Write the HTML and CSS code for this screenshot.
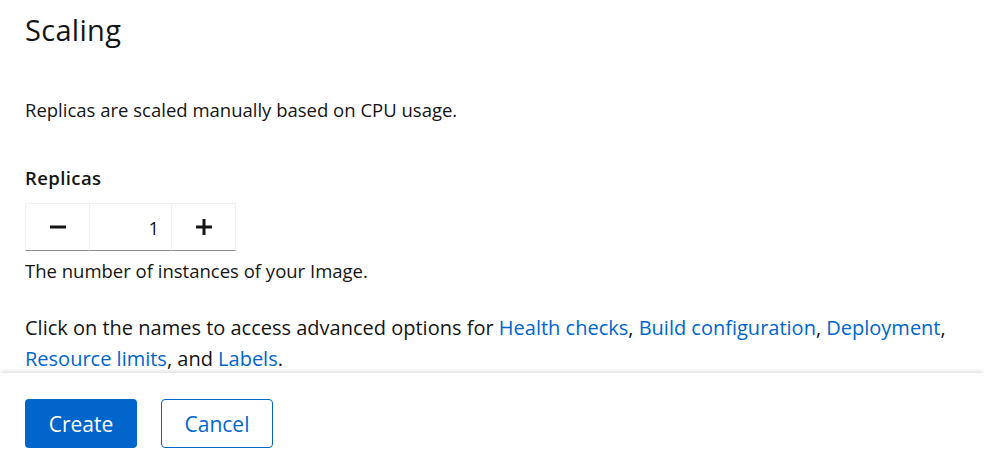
FILE: index.html
```html
<!DOCTYPE html>
<html lang="en">
<head>
<meta charset="utf-8">
<title>Scaling</title>
<link rel="stylesheet" href="styles.css">
</head>
<body>
<main class="page">
  <section class="content">
    <h2 class="title">Scaling</h2>
    <p class="desc">Replicas are scaled manually based on CPU usage.</p>
    <div class="field">
      <label class="label" for="replicas">Replicas</label>
      <div class="number">
        <button class="step" type="button" aria-label="Minus">
          <svg width="16" height="16" viewBox="0 0 16 16"><rect x="0" y="6.5" width="16" height="3" fill="#151515"/></svg>
        </button>
        <input id="replicas" class="num-input" type="text" value="1">
        <button class="step" type="button" aria-label="Plus">
          <svg width="16" height="16" viewBox="0 0 16 16"><rect x="0" y="6.5" width="16" height="3" fill="#151515"/><rect x="6.5" y="0" width="3" height="16" fill="#151515"/></svg>
        </button>
      </div>
      <div class="help">The number of instances of your Image.</div>
    </div>
    <p class="advanced">Click on the names to access advanced options for <a href="#">Health checks</a>, <a href="#">Build configuration</a>, <a href="#">Deployment</a>, <a href="#">Resource limits</a>, and <a href="#">Labels</a>.</p>
  </section>
  <footer class="footer">
    <button class="btn btn-primary" type="button">Create</button>
    <button class="btn btn-secondary" type="button">Cancel</button>
  </footer>
</main>
</body>
</html>
```
FILE: styles.css
```css
html, body {
  margin: 0;
  padding: 0;
  background: #fff;
}
body {
  font-family: "Open Sans", "Liberation Sans", sans-serif;
  color: #151515;
  height: 460px;
  overflow: hidden;
}
.page {
  display: flex;
  flex-direction: column;
}
.content {
  padding: 0 25px;
  height: 373px;
}
.title {
  margin: 0;
  padding-top: 11px;
  font-size: 29px;
  font-weight: 400;
  line-height: 38px;
  letter-spacing: 0.3px;
}
.desc {
  margin: 48px 0 0;
  font-size: 18.5px;
  line-height: 26px;
}
.field {
  margin-top: 42px;
  display: flex;
  flex-direction: column;
}
.label {
  font-size: 18.5px;
  font-weight: 600;
  line-height: 26px;
  letter-spacing: 0.4px;
}
.number {
  margin-top: 12px;
  display: flex;
  width: max-content;
}
.step, .num-input {
  box-sizing: border-box;
  height: 48px;
  border: 1px solid #f0f0f0;
  border-bottom-color: #8a8d90;
  background: #fff;
  margin: 0;
}
.step {
  width: 65px;
  display: flex;
  align-items: center;
  justify-content: center;
  padding: 0;
}
.step + .num-input { border-left: 0; }
.num-input + .step { border-left: 0; width: 64px; }
.num-input {
  width: 82px;
  padding: 0 12px;
  text-align: right;
  font-family: inherit;
  font-size: 18.5px;
  color: #151515;
}
.help {
  margin-top: 7px;
  font-size: 18.5px;
  line-height: 26px;
}
.advanced {
  margin: 28px 0 0;
  font-size: 20px;
  line-height: 31px;
}
.advanced a {
  color: #0066cc;
  text-decoration: none;
}
.footer {
  box-shadow: 0 -3px 4px -1px rgba(3, 3, 3, 0.12);
  background: #fff;
  height: 87px;
  padding: 26px 25px 0;
  box-sizing: border-box;
  display: flex;
  gap: 24px;
  align-items: flex-start;
}
.btn {
  box-sizing: border-box;
  height: 49px;
  width: 112px;
  border-radius: 4px;
  font-family: inherit;
  font-size: 21px;
  padding: 0;
}
.btn-primary {
  background: #0066cc;
  color: #fff;
  border: 0;
}
.btn-secondary {
  background: #fff;
  color: #0066cc;
  border: 1px solid #0066cc;
}
```
